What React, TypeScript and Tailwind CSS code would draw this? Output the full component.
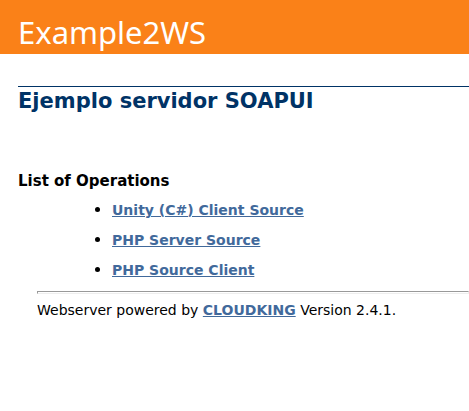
export default function App() {
  const link = "font-bold text-[#41699b] underline decoration-1";
  return (
    <div className="min-h-screen bg-white text-sm text-black [font-family:Verdana,'DejaVu_Sans',sans-serif]">
      <header className="bg-[#fa8118] px-[18px] pt-[14px] pb-1">
        <h1 className="text-[31px] leading-[36px] font-normal text-white [font-family:Tahoma,'Noto_Sans',sans-serif]">Example2WS</h1>
      </header>
      <main className="pt-8">
        <section className="ml-[18px]">
          <h2 className="border-t border-[#003366] text-[21px] leading-7 font-bold text-[#003366]">Ejemplo servidor SOAPUI</h2>
          <h3 className="mt-14 text-[15px] leading-5 font-bold">List of Operations</h3>
          <ul className="mt-1 ml-[94px] list-disc leading-[30px] marker:text-base">
            <li><a href="#unity" className={link}>Unity (C#) Client Source</a></li>
            <li><a href="#php-server" className={link}>PHP Server Source</a></li>
            <li><a href="#php-client" className={link}>PHP Source Client</a></li>
          </ul>
        </section>
        <footer className="ml-[37px]">
          <hr className="mt-1.5 h-[3px] border border-[#999999] border-r-[#eeeeee] border-b-[#eeeeee]" />
          <p className="mt-1.5 leading-5">Webserver powered by <a href="#cloudking" className={link}>CLOUDKING</a> Version 2.4.1.</p>
        </footer>
      </main>
    </div>
  );
}
